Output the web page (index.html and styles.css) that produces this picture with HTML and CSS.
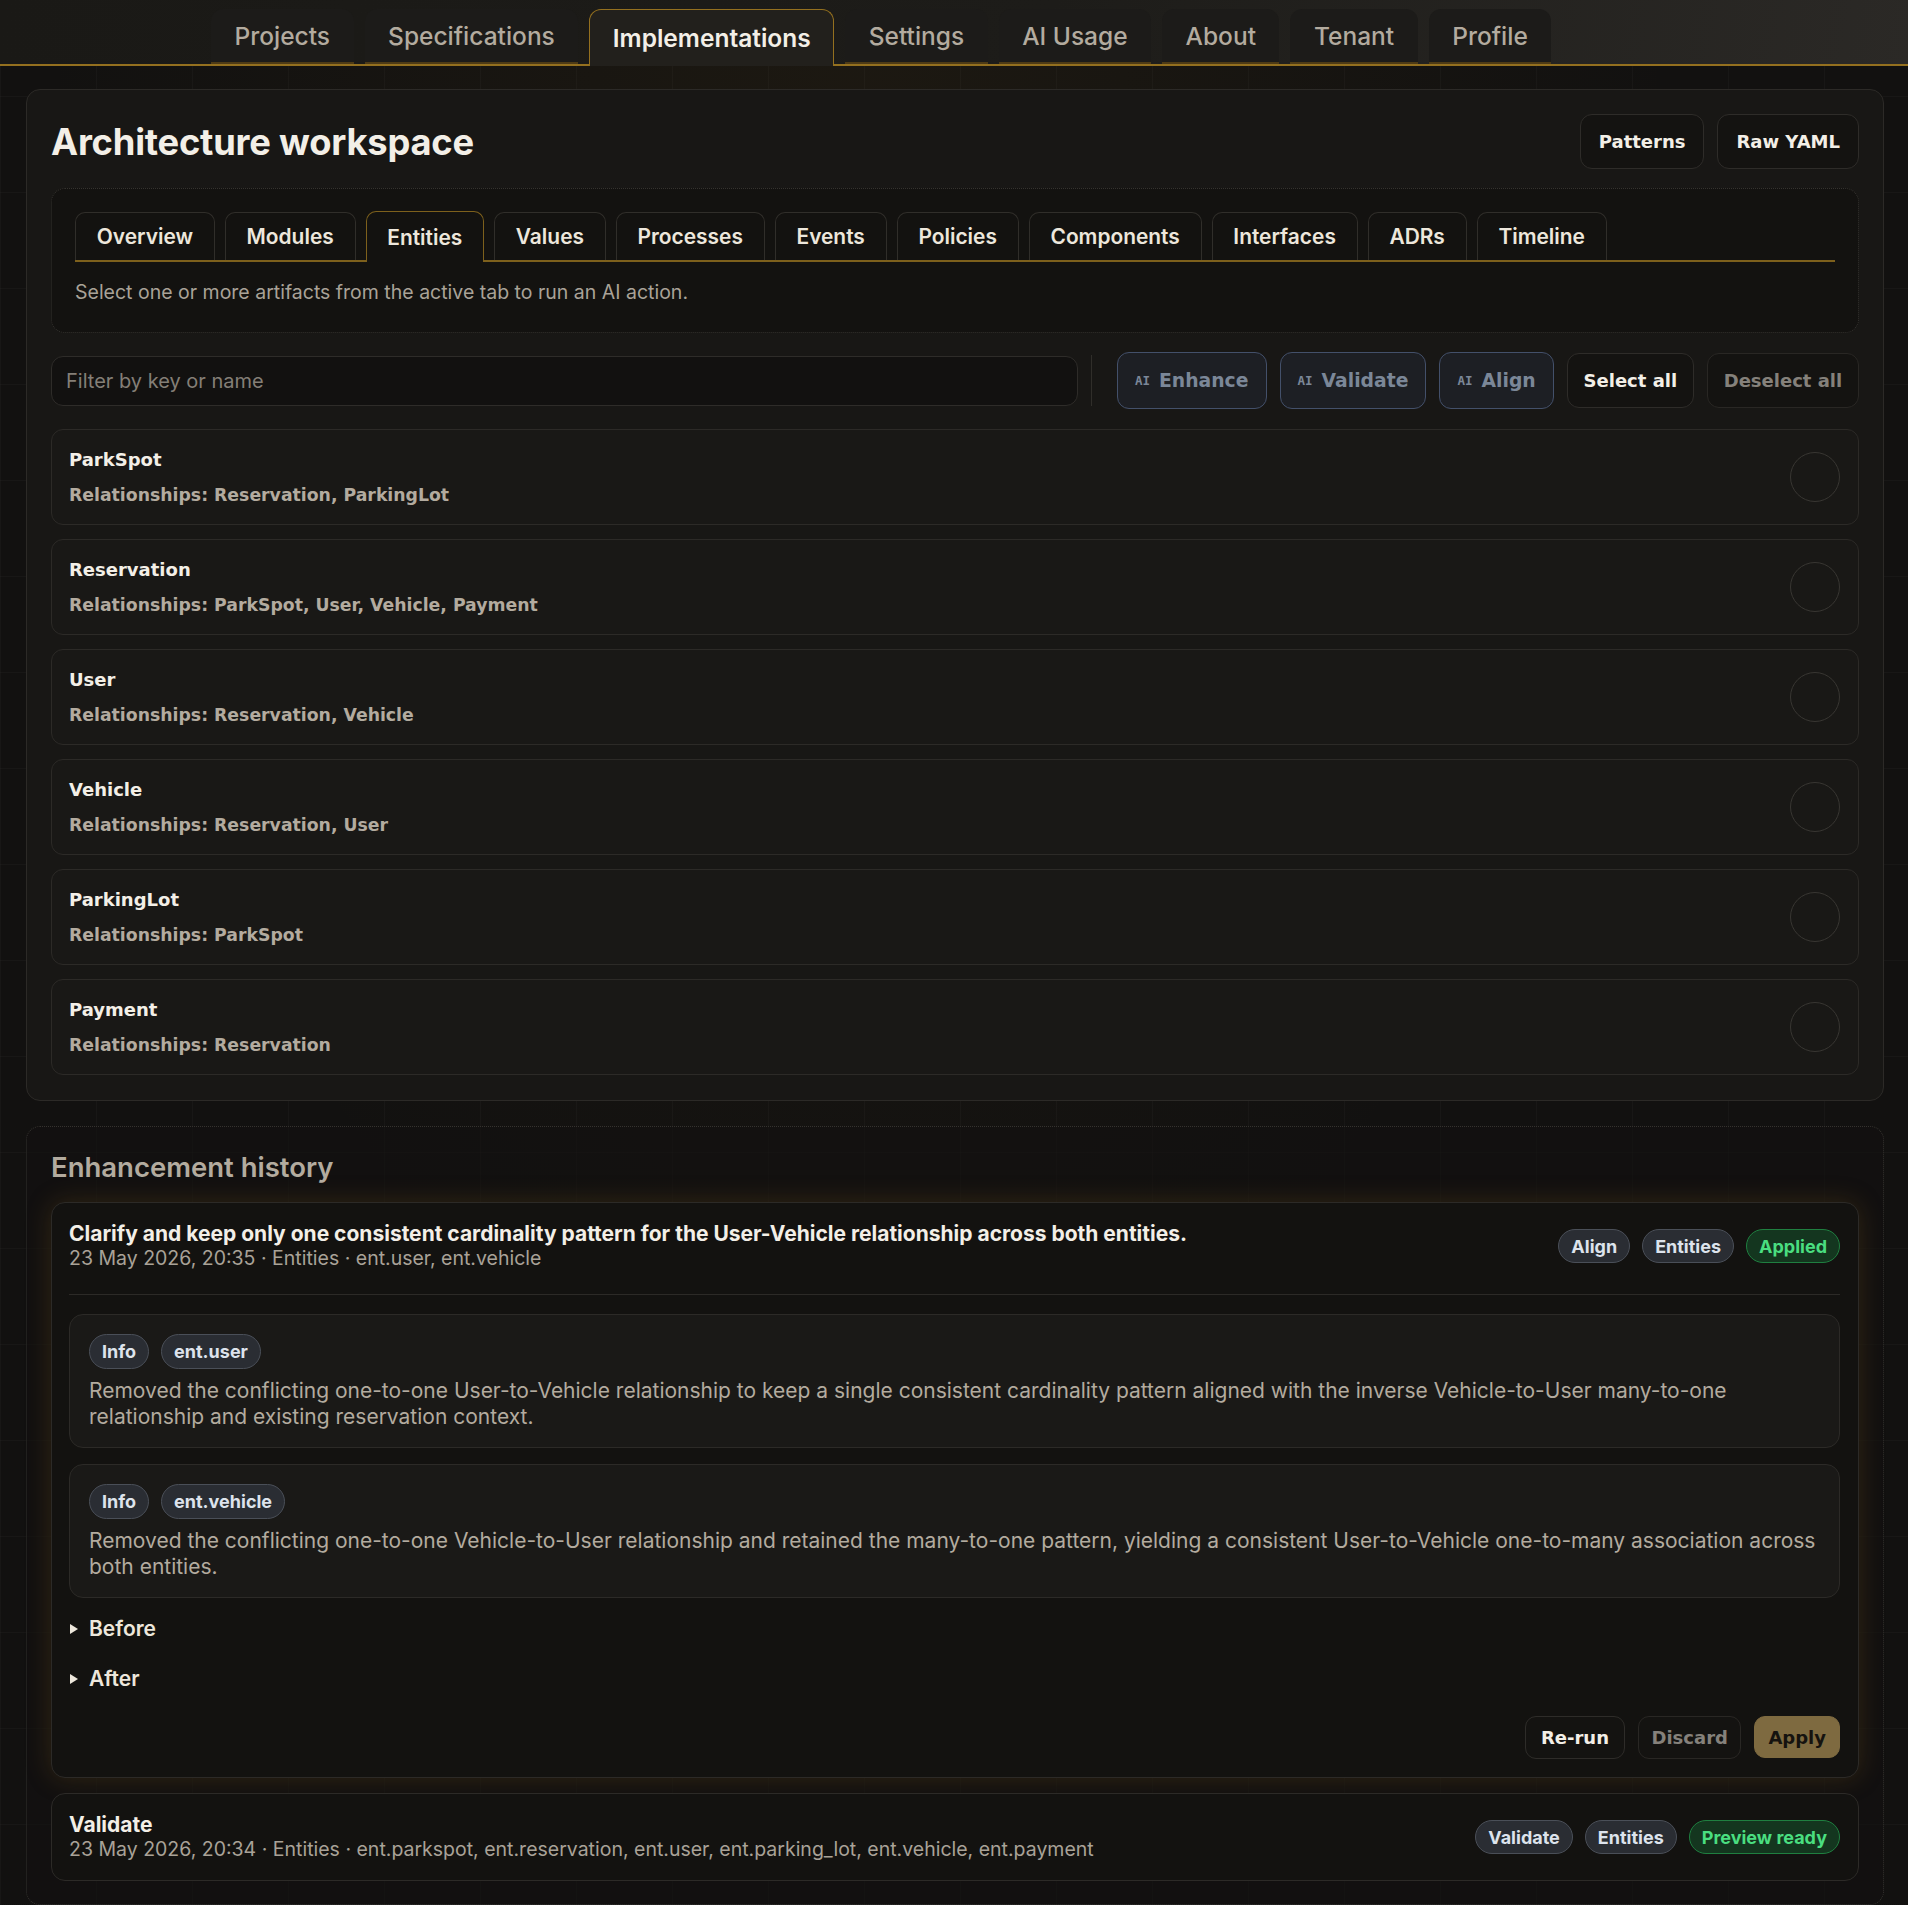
FILE: index.html
```html
<!DOCTYPE html>
<html lang="en">
<head>
    <meta charset="UTF-8">
    <meta name="viewport" content="width=device-width, initial-scale=1.0">
    <title>Architecture workspace</title>
    <link rel="stylesheet" href="styles.css">
</head>
<body>
    <header class="topbar">
        <nav class="top-tabs">
            <a href="#" class="top-tab">Projects</a>
            <a href="#" class="top-tab">Specifications</a>
            <a href="#" class="top-tab active">Implementations</a>
            <a href="#" class="top-tab">Settings</a>
            <a href="#" class="top-tab">AI Usage</a>
            <a href="#" class="top-tab">About</a>
            <a href="#" class="top-tab">Tenant</a>
            <a href="#" class="top-tab">Profile</a>
        </nav>
    </header>

    <section class="panel workspace">
        <div class="title-row">
            <h1>Architecture workspace</h1>
            <div class="title-actions">
                <button class="btn">Patterns</button>
                <button class="btn">Raw YAML</button>
            </div>
        </div>

        <div class="tab-box">
            <div class="sub-tabs">
                <a href="#" class="sub-tab">Overview</a>
                <a href="#" class="sub-tab">Modules</a>
                <a href="#" class="sub-tab active">Entities</a>
                <a href="#" class="sub-tab">Values</a>
                <a href="#" class="sub-tab">Processes</a>
                <a href="#" class="sub-tab">Events</a>
                <a href="#" class="sub-tab">Policies</a>
                <a href="#" class="sub-tab">Components</a>
                <a href="#" class="sub-tab">Interfaces</a>
                <a href="#" class="sub-tab">ADRs</a>
                <a href="#" class="sub-tab">Timeline</a>
            </div>
            <p class="hint">Select one or more artifacts from the active tab to run an AI action.</p>
        </div>

        <div class="filter-row">
            <input class="filter" type="text" placeholder="Filter by key or name">
            <span class="divider"></span>
            <button class="btn ai" disabled><span class="ai-tag">AI</span>Enhance</button>
            <button class="btn ai" disabled><span class="ai-tag">AI</span>Validate</button>
            <button class="btn ai" disabled><span class="ai-tag">AI</span>Align</button>
            <button class="btn">Select all</button>
            <button class="btn muted">Deselect all</button>
        </div>

        <div class="entity-list">
            <div class="entity">
                <div class="entity-text">
                    <div class="entity-name">ParkSpot</div>
                    <div class="entity-rel">Relationships: Reservation, ParkingLot</div>
                </div>
                <span class="check"></span>
            </div>
            <div class="entity">
                <div class="entity-text">
                    <div class="entity-name">Reservation</div>
                    <div class="entity-rel">Relationships: ParkSpot, User, Vehicle, Payment</div>
                </div>
                <span class="check"></span>
            </div>
            <div class="entity">
                <div class="entity-text">
                    <div class="entity-name">User</div>
                    <div class="entity-rel">Relationships: Reservation, Vehicle</div>
                </div>
                <span class="check"></span>
            </div>
            <div class="entity">
                <div class="entity-text">
                    <div class="entity-name">Vehicle</div>
                    <div class="entity-rel">Relationships: Reservation, User</div>
                </div>
                <span class="check"></span>
            </div>
            <div class="entity">
                <div class="entity-text">
                    <div class="entity-name">ParkingLot</div>
                    <div class="entity-rel">Relationships: ParkSpot</div>
                </div>
                <span class="check"></span>
            </div>
            <div class="entity">
                <div class="entity-text">
                    <div class="entity-name">Payment</div>
                    <div class="entity-rel">Relationships: Reservation</div>
                </div>
                <span class="check"></span>
            </div>
        </div>
    </section>

    <section class="history">
        <h2>Enhancement history</h2>

        <div class="run-card current">
            <div class="run-head">
                <div>
                    <div class="run-title">Clarify and keep only one consistent cardinality pattern for the User-Vehicle relationship across both entities.</div>
                    <div class="run-meta">23 May 2026, 20:35 · Entities · ent.user, ent.vehicle</div>
                </div>
                <div class="pills">
                    <span class="pill">Align</span>
                    <span class="pill">Entities</span>
                    <span class="pill ok">Applied</span>
                </div>
            </div>

            <div class="finding">
                <div class="pills">
                    <span class="pill">Info</span>
                    <span class="pill">ent.user</span>
                </div>
                <p>Removed the conflicting one-to-one User-to-Vehicle relationship to keep a single consistent cardinality pattern aligned with the inverse Vehicle-to-User many-to-one relationship and existing reservation context.</p>
            </div>
            <div class="finding">
                <div class="pills">
                    <span class="pill">Info</span>
                    <span class="pill">ent.vehicle</span>
                </div>
                <p>Removed the conflicting one-to-one Vehicle-to-User relationship and retained the many-to-one pattern, yielding a consistent User-to-Vehicle one-to-many association across both entities.</p>
            </div>

            <details class="diff"><summary>Before</summary></details>
            <details class="diff"><summary>After</summary></details>

            <div class="run-actions">
                <button class="btn small">Re-run</button>
                <button class="btn small muted">Discard</button>
                <button class="btn small apply">Apply</button>
            </div>
        </div>

        <div class="run-card">
            <div class="run-head">
                <div>
                    <div class="run-title">Validate</div>
                    <div class="run-meta">23 May 2026, 20:34 · Entities · ent.parkspot, ent.reservation, ent.user, ent.parking_lot, ent.vehicle, ent.payment</div>
                </div>
                <div class="pills">
                    <span class="pill">Validate</span>
                    <span class="pill">Entities</span>
                    <span class="pill ok">Preview ready</span>
                </div>
            </div>
        </div>
    </section>
</body>
</html>
```

FILE: styles.css
```css
body {
    margin: 0;
    padding: 0 0 2px;
    font-family: Inter, "Noto Sans", sans-serif;
    color: #ede7dc;
    background-color: #121110;
    background-image:
        radial-gradient(ellipse at 45% 0%, rgba(120, 90, 30, 0.10), transparent 55%),
        linear-gradient(rgba(255, 255, 255, 0.022) 1px, transparent 1px),
        linear-gradient(90deg, rgba(255, 255, 255, 0.022) 1px, transparent 1px);
    background-size: auto, 96px 96px, 96px 96px;
}

/* top navigation */
.topbar {
    background: linear-gradient(100deg, #1a1916 0%, #1d1c19 55%, #2b2926 100%);
    border-bottom: 2px solid #94701f;
    height: 64px;
}

.top-tabs {
    display: flex;
    align-items: flex-end;
    gap: 11px;
    height: 64px;
    padding-left: 211px;
}

.top-tab {
    display: flex;
    align-items: center;
    height: 53px;
    padding: 0 23.5px;
    font-size: 24.5px;
    font-weight: 500;
    color: #b3ab9f;
    text-decoration: none;
    background-color: #1c1b19;
    border-radius: 12px 12px 0 0;
    border-bottom: 2px solid #4e3b16;
}

.top-tab.active {
    height: 56px;
    margin-bottom: -2px;
    padding: 0 22.5px;
    color: #f3efe7;
    font-weight: 600;
    background-color: #22201c;
    border: 1px solid #94701f;
    border-bottom: none;
}

/* panels */
.panel {
    margin: 23px 24px 0 26px;
    padding: 24px 24px 25px 24px;
    background-color: #181715;
    border: 1px solid #2c2a27;
    border-radius: 14px;
}

.title-row {
    display: flex;
    justify-content: space-between;
    align-items: center;
}

.title-row h1 {
    margin: 0;
    font-size: 36.3px;
    font-weight: 700;
    color: #f3efe7;
    letter-spacing: -0.2px;
}

.title-actions {
    display: flex;
    gap: 13px;
}

.btn {
    display: inline-flex;
    align-items: center;
    justify-content: center;
    height: 55px;
    padding: 0 15.8px;
    font-family: "DejaVu Sans", Verdana, sans-serif;
    font-size: 18px;
    font-weight: 700;
    color: #f3efe7;
    background-color: #141311;
    border: 1px solid #2e2c29;
    border-radius: 12px;
    cursor: pointer;
}

.title-actions .btn {
    padding: 0 18px;
}

.btn.muted {
    color: #85817b;
    border-color: #292724;
}

.btn.ai {
    height: 57px;
    padding: 0 17px;
    font-size: 18.8px;
    color: #7b8798;
    background-color: #1d1f24;
    border-color: #43506a;
    cursor: default;
}

.ai-tag {
    font-family: "DejaVu Sans Mono", monospace;
    font-size: 12.5px;
    margin-right: 9px;
}

/* sub tabs */
.tab-box {
    margin-top: 19px;
    padding: 23px 23px 28px;
    background-color: #131210;
    border: 1px dotted #35332f;
    border-radius: 14px;
}

.sub-tabs {
    display: flex;
    align-items: flex-end;
    gap: 10px;
    height: 48px;
    border-bottom: 2px solid #7d601c;
}

.sub-tab {
    display: flex;
    align-items: center;
    height: 47px;
    padding: 0 20.8px;
    font-size: 20.9px;
    font-weight: 600;
    color: #ede7dc;
    text-decoration: none;
    background-color: #131210;
    border: 1px solid #302e2a;
    border-bottom: none;
    border-radius: 10px 10px 0 0;
}

.sub-tab.active {
    height: 50px;
    margin-bottom: -2px;
    border-color: #7d601c;
}

.hint {
    margin: 18px 0 0;
    font-size: 19.5px;
    line-height: 24px;
    color: #a9a298;
}

/* filter + actions */
.filter-row {
    display: flex;
    align-items: center;
    gap: 13px;
    margin-top: 19px;
}

.filter {
    flex: 1;
    height: 50px;
    box-sizing: border-box;
    padding: 0 14px;
    font-family: Inter, sans-serif;
    font-size: 20px;
    color: #ede7dc;
    background-color: #121110;
    border: 1px solid #2e2c29;
    border-radius: 12px;
    outline: none;
}

.filter::placeholder {
    color: #847f77;
}

.divider {
    width: 1px;
    height: 51px;
    margin-right: 12px;
    background-color: #302e2a;
}

/* entity rows */
.entity-list {
    display: flex;
    flex-direction: column;
    gap: 14px;
    margin-top: 20px;
}

.entity {
    display: flex;
    align-items: center;
    justify-content: space-between;
    height: 96px;
    box-sizing: border-box;
    padding: 0 18px 0 17px;
    background-color: #191816;
    border: 1px solid #2c2a27;
    border-radius: 12px;
    font-family: "DejaVu Sans", Verdana, sans-serif;
    font-weight: 700;
}

.entity-name {
    font-size: 18px;
    line-height: 24px;
    color: #f3efe7;
}

.entity-rel {
    margin-top: 11px;
    font-size: 17.3px;
    line-height: 24px;
    color: #b3ab9f;
}

.check {
    width: 48px;
    height: 48px;
    border: 1.5px solid #383632;
    border-radius: 50%;
}

/* history */
.history {
    margin: 25px 24px 0 26px;
    padding: 24px 24px 23px 24px;
    border: 1px dotted #35332f;
    border-radius: 14px;
    background-color: rgba(18, 17, 16, 0.6);
}

.history h2 {
    margin: 0;
    font-size: 27.5px;
    line-height: 33px;
    font-weight: 600;
    color: #b3ab9f;
}

.run-card {
    margin-top: 15px;
    padding: 18px 18px 18px 17px;
    background-color: #131210;
    border: 1px solid #2c2a27;
    border-radius: 14px;
}

.run-card.current {
    margin-top: 18px;
    box-shadow: 0 0 26px rgba(130, 95, 25, 0.28);
}

.run-head {
    display: flex;
    justify-content: space-between;
    align-items: center;
}

.run-card.current .run-head {
    padding-bottom: 23px;
    border-bottom: 1px solid #2c2a27;
}

.run-title {
    font-size: 21px;
    line-height: 25px;
    font-weight: 700;
    color: #f3efe7;
}

.run-meta {
    font-size: 19.5px;
    line-height: 25px;
    color: #a9a298;
}

.pills {
    display: flex;
    gap: 12px;
    align-items: center;
}

.pill {
    display: inline-flex;
    align-items: center;
    height: 34px;
    box-sizing: border-box;
    padding: 0 12px;
    font-size: 18px;
    font-weight: 700;
    color: #dde3ec;
    background-color: #2a2d33;
    border: 1px solid #4a4f58;
    border-radius: 18px;
}

.pill.ok {
    color: #4ade80;
    background-color: #14361f;
    border-color: #1f7f40;
}

.finding {
    margin-top: 19px;
    padding: 19px 19px 18px;
    background-color: #1a1917;
    border: 1px solid #2c2a27;
    border-radius: 14px;
}

.finding + .finding {
    margin-top: 16px;
}

.finding .pill {
    height: 35px;
    padding: 0 12px;
}

.finding p {
    margin: 9px 0 0;
    font-size: 21px;
    line-height: 25.5px;
    color: #b3ab9f;
}

.diff {
    margin-top: 24px;
}

.finding + .diff {
    margin-top: 18px;
}

.diff summary {
    list-style: none;
    display: flex;
    align-items: center;
    font-size: 21px;
    line-height: 26px;
    font-weight: 600;
    color: #ede7dc;
    cursor: pointer;
}

.diff summary::-webkit-details-marker {
    display: none;
}

.diff summary::before {
    content: "";
    width: 0;
    height: 0;
    margin: 0 11px 0 1px;
    border-left: 8px solid #ede7dc;
    border-top: 5px solid transparent;
    border-bottom: 5px solid transparent;
}

.run-actions {
    display: flex;
    justify-content: flex-end;
    gap: 13px;
    margin-top: 24px;
}

.btn.small {
    height: 43px;
    padding: 0 15px;
    border-radius: 11px;
}

.btn.small.muted {
    padding: 0 12.5px;
}

.btn.apply {
    height: 42px;
    padding: 0 13px;
    color: #15130f;
    background-color: #7e6a40;
    border-color: #7e6a40;
}
```
